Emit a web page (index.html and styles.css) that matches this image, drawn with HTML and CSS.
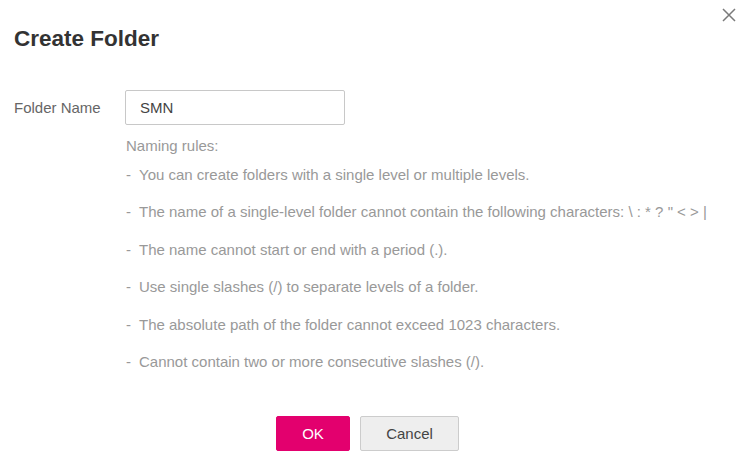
FILE: index.html
```html
<!DOCTYPE html>
<html lang="en">
<head>
<meta charset="utf-8">
<title>Create Folder</title>
<link rel="stylesheet" href="styles.css">
</head>
<body>
<div class="dialog">
  <button class="close" aria-label="Close">
    <svg width="14" height="14" viewBox="0 0 14 14"><path d="M1 1L13 13M13 1L1 13" stroke="#7a7a7a" stroke-width="1.5" fill="none"/></svg>
  </button>
  <h1 class="title">Create Folder</h1>
  <div class="form-row">
    <label class="label" for="name">Folder Name</label>
    <div class="field">
      <input class="input" id="name" type="text" value="SMN">
      <div class="rules">
        <div class="rules-head">Naming rules:</div>
        <ul class="rule-list">
          <li>You can create folders with a single level or multiple levels.</li>
          <li>The name of a single-level folder cannot contain the following characters: \ : * ? " &lt; &gt; |</li>
          <li>The name cannot start or end with a period (.).</li>
          <li>Use single slashes (/) to separate levels of a folder.</li>
          <li>The absolute path of the folder cannot exceed 1023 characters.</li>
          <li>Cannot contain two or more consecutive slashes (/).</li>
        </ul>
      </div>
    </div>
  </div>
  <div class="footer">
    <button class="btn btn-primary">OK</button>
    <button class="btn btn-default">Cancel</button>
  </div>
</div>
</body>
</html>
```
FILE: styles.css
```css
* { box-sizing: border-box; }
html, body { margin: 0; padding: 0; background: #fff; }
body { font-family: "Liberation Sans", Arial, sans-serif; color: #333; }
.dialog { position: relative; width: 746px; height: 464px; padding: 24px 14px 0 14px; }
.close { position: absolute; top: 8px; right: 10px; width: 14px; height: 14px; padding: 0; border: 0; background: none; cursor: pointer; display: flex; }
.title { margin: 0; font-size: 22.5px; font-weight: bold; line-height: 30px; color: #333; }
.form-row { display: flex; margin-top: 36px; }
.label { width: 111px; flex: none; font-size: 15px; color: #666; line-height: 35px; }
.field { display: flex; flex-direction: column; }
.input { width: 220px; height: 35px; border: 1px solid #c8c8c8; border-radius: 2px; padding: 0 14px; font-family: inherit; font-size: 15px; color: #444; outline: none; }
.rules { padding-left: 1px; color: #999; font-size: 15px; }
.rules-head { margin-top: 11px; line-height: 20px; }
.rule-list { list-style: none; margin: 0; padding: 0; }
.rule-list li { line-height: 20px; margin-top: 17.4px; }
.rule-list li:first-child { margin-top: 9px; }
.rule-list li::before { content: "-"; margin-right: 8px; }
.footer { display: flex; justify-content: center; gap: 10px; margin-top: 44px; padding-right: 11px; }
.btn { height: 35px; border-radius: 2px; font-family: inherit; font-size: 15px; cursor: pointer; }
.btn-primary { width: 74px; background: #e3006e; border: 1px solid #e3006e; color: #fff; }
.btn-default { width: 99px; background: #eee; border: 1px solid #ccc; color: #444; }
```
